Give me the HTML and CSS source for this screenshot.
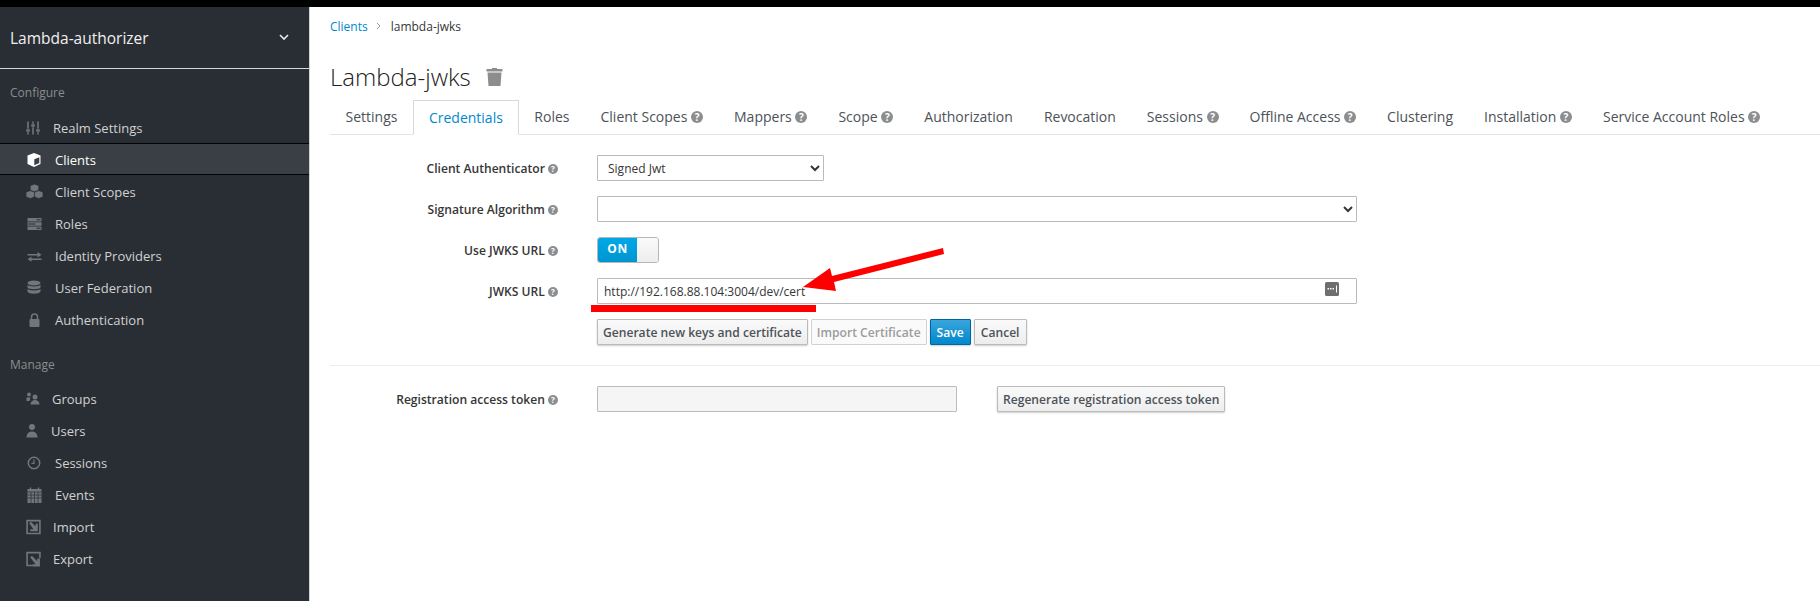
FILE: index.html
```html
<!DOCTYPE html>
<html lang="en">
<head>
  <meta charset="UTF-8" />
  <meta name="viewport" content="width=device-width, initial-scale=1.0"/>
  <title>Lambda-jwks</title>
  <link rel="stylesheet" href="styles.css">
</head>
<body>
  <div class="topbar"></div>
  <div class="page">
    <aside class="sidebar">
      <div class="realm">
        <span>Lambda-authorizer</span>
        <svg width="10" height="7" viewBox="0 0 10 7"><path d="M1 1l4 4 4-4" fill="none" stroke="#e8e8e8" stroke-width="1.6"/></svg>
      </div>
      <h4 class="nav-heading">Configure</h4>
      <ul class="nav">
        <li><svg width="15" height="16" viewBox="0 0 15 16"><path d="M2 1.500v13M7 1.500v13M12 1.500v13" stroke="#72767b" stroke-width="1.600"/><path d="M0 9h4v3H0zM5 4h4v3H5zM10 9h4v3h-4z" fill="#72767b" stroke="#292e34" stroke-width=".5"/></svg>Realm Settings</li>
        <li class="active"><svg width="17" height="16" viewBox="0 0 16 16"><path d="M7.500 1l6.500 2.500v8.500L7.500 15 1 12V3.500z" fill="#fff"/><path d="M7.800 13.300l5-2.200V5.200l-5 2z" fill="#393f44"/></svg>Clients</li>
        <li><svg width="17" height="17" viewBox="0 0 18 16"><path d="M9 .2l4.400 1.600v4.800L9 8.200 4.600 6.600V1.800zM4.500 7.100l4.400 1.600v4.900L4.500 15.300.1 13.600V8.700zM13.500 7.100l4.400 1.600v4.900l-4.400 1.700-4.400-1.700V8.700z" fill="#72767b" stroke="#292e34" stroke-width=".5"/></svg>Client Scopes</li>
        <li><svg width="17" height="16" viewBox="0 0 16 16"><path d="M1 2h14v3.600H1zM1 6.200h14v3.600H1zM1 10.400h14V14H1z" fill="#72767b"/><path d="M10 3.800h4M2 8h7M10 12.200h4" stroke="#292e34"/></svg>Roles</li>
        <li><svg width="17" height="16" viewBox="0 0 16 16"><path d="M1 6h10V4l4 2.700-4 2.700V7.500H1zM15 10.500V12H5v1.800L1 11.200l4-2.700v2z" fill="#72767b"/></svg>Identity Providers</li>
        <li><svg width="17" height="16" viewBox="0 0 16 16"><ellipse cx="7.500" cy="3" rx="6.500" ry="2.500" fill="#72767b"/><path d="M1 4.800c1 2.300 12 2.300 13 0v2.700c-1 2.300-12 2.300-13 0zM1 8.800c1 2.300 12 2.300 13 0v2.700c-1 3-12 3-13 0z" fill="#72767b"/></svg>User Federation</li>
        <li><svg width="17" height="16" viewBox="0 0 16 16"><path d="M5 7V5a3 3 0 0 1 6 0v2" fill="none" stroke="#72767b" stroke-width="1.500"/><rect x="3" y="7" width="10" height="8" rx="1" fill="#72767b"/></svg>Authentication</li>
      </ul>
      <h4 class="nav-heading manage">Manage</h4>
      <ul class="nav">
        <li><svg width="14" height="16" viewBox="0 0 14 16"><circle cx="3" cy="3.500" r="2" fill="#72767b"/><circle cx="9" cy="6" r="2.500" fill="#72767b"/><path d="M.5 6.500h4L3.500 10H.5zM4.500 13.500c0-6 9-6 9 0z" fill="#72767b"/></svg>Groups</li>
        <li><svg width="13" height="16" viewBox="0 0 13 16"><circle cx="6" cy="4" r="3" fill="#72767b"/><path d="M.5 14.500c0-8 11-8 11 0z" fill="#72767b"/></svg>Users</li>
        <li><svg width="17" height="16" viewBox="0 0 16 16"><circle cx="7.500" cy="8" r="5.700" fill="none" stroke="#72767b" stroke-width="1.500"/><path d="M7.500 4.500V8.300H5" fill="none" stroke="#72767b" stroke-width="1.200"/></svg>Sessions</li>
        <li><svg width="17" height="16" viewBox="0 0 16 16"><path d="M1 2h14v14H1z" fill="#72767b"/><path d="M4 .5v3M12 .5v3" stroke="#72767b" stroke-width="1.500"/><path d="M1 5h14M1 8h14M1 11h14M4.500 5v11M8 5v11M11.500 5v11" stroke="#292e34" stroke-width=".7"/></svg>Events</li>
        <li><svg width="15" height="16" viewBox="0 0 14 14"><path d="M1 1h12v12H1z" fill="none" stroke="#72767b" stroke-width="1.500"/><path d="M3 3.500L4.500 2 9 6.500V4h2v7H4V9h3z" fill="#72767b"/></svg>Import</li>
        <li><svg width="15" height="16" viewBox="0 0 14 14"><path d="M6 13H1V1h12v5" fill="none" stroke="#72767b" stroke-width="1.500"/><path d="M4 5.500L5.500 4 10.500 9V6.500h2.500V14H6v-2h3z" fill="#72767b"/></svg>Export</li>
      </ul>
    </aside>

    <main class="content">
      <div class="crumbs">
        <a href="#">Clients</a>
        <svg width="6" height="8" viewBox="0 0 6 8"><path d="M1 1l3 3-3 3" fill="none" stroke="#9c9c9c"/></svg>
        <span>lambda-jwks</span>
      </div>
      <div class="title-row">
        <h1>Lambda-jwks</h1>
        <svg width="17" height="19" viewBox="0 0 17 19"><path d="M6 2V1h5v1h5.500v2.500H.5V2zM1.500 5.500h14L14.500 19h-12z" fill="#8b8d8f"/></svg>
      </div>
      <ul class="tabs">
        <li>Settings</li>
        <li class="current">Credentials</li>
        <li>Roles</li>
        <li>Client Scopes <span class="q">?</span></li>
        <li>Mappers <span class="q">?</span></li>
        <li>Scope <span class="q">?</span></li>
        <li>Authorization</li>
        <li>Revocation</li>
        <li>Sessions <span class="q">?</span></li>
        <li>Offline Access <span class="q">?</span></li>
        <li>Clustering</li>
        <li>Installation <span class="q">?</span></li>
        <li>Service Account Roles <span class="q">?</span></li>
      </ul>

      <form class="form">
        <div class="row">
          <label>Client Authenticator <span class="q small">?</span></label>
          <select class="field short"><option>Signed Jwt</option></select>
        </div>
        <div class="row">
          <label>Signature Algorithm <span class="q small">?</span></label>
          <select class="field wide"><option></option></select>
        </div>
        <div class="row">
          <label>Use JWKS URL <span class="q small">?</span></label>
          <div class="switch"><span class="on">ON</span><span class="knob"></span></div>
        </div>
        <div class="row">
          <label>JWKS URL <span class="q small">?</span></label>
          <div class="input-wrap wide">
            <input class="field" type="text" value="http://192.168.88.104:3004/dev/cert">
            <span class="pw-key"><svg width="14" height="14" viewBox="0 0 14 14"><rect width="14" height="14" rx="1.500" fill="#6e6e6e"/><path d="M2.500 6h1.500v1.500H2.500zM5 6h1.500v1.500H5zM7.500 6H9v1.500H7.500z" fill="#fff"/><path d="M11.500 3.500v7" stroke="#fff"/></svg></span>
          </div>
        </div>
        <div class="row actions">
          <button type="button" class="btn">Generate new keys and certificate</button>
          <button type="button" class="btn off">Import Certificate</button>
          <button type="button" class="btn primary">Save</button>
          <button type="button" class="btn cancel">Cancel</button>
        </div>
        <hr>
        <div class="row">
          <label>Registration access token <span class="q small">?</span></label>
          <input class="field token" type="text" disabled>
          <button type="button" class="btn regen">Regenerate registration access token</button>
        </div>
      </form>
    </main>
  </div>

  <!-- red markup drawn on top of the screenshot -->
  <svg class="markup" width="1820" height="601" viewBox="0 0 1820 601">
    <path d="M943 248L832 276 830 268 803 287 836 291 834 282 944 254z" fill="#fe0000"/>
    <rect x="591" y="305" width="225" height="7" fill="#fe0000"/>
  </svg>
</body>
</html>
```

FILE: styles.css
```css
* {
  box-sizing: border-box;
}
html, body {
  height: 100%;
}
body {
  margin: 0;
  font-family: "Open Sans", sans-serif;
  font-size: 13px;
  color: #363636;
  background: white;
  overflow: hidden;
}
.topbar {
  height: 7px;
  background: black;
}
.page {
  display: flex;
  height: 594px;
}
.sidebar {
  width: 310px;
  flex: none;
  background: #292e34;
  border-right: 1px solid #d1d1d1;
  color: #d1d1d1;
}
.realm {
  height: 62px;
  padding: 0 20px 0 10px;
  display: flex;
  align-items: center;
  justify-content: space-between;
  font-size: 15.5px;
  color: #f0f0f0;
  border-bottom: 1px solid #d8d8d8;
}
.nav-heading {
  margin: 0;
  padding: 15px 0 9px 10px;
  font-size: 12px;
  line-height: 18px;
  font-weight: 400;
  color: #8b8d8f;
}
.nav-heading.manage {
  margin-top: 6px;
  padding-bottom: 8px;
}
.nav {
  list-style: none;
  margin: 0;
  padding: 0;
}
.nav li {
  height: 32px;
  padding: 1px 0 0 26px;
  display: flex;
  align-items: center;
  gap: 12px;
  font-size: 13px;
}
.nav li.active {
  background: #393f44;
  border-top: 1px solid #030303;
  border-bottom: 1px solid #030303;
  color: white;
}
.content {
  flex: 1;
  min-width: 0;
  padding-left: 20px;
}
.crumbs {
  height: 38px;
  display: flex;
  align-items: center;
  gap: 8.5px;
  font-size: 12px;
}
.crumbs a {
  color: #0088ce;
  text-decoration: none;
}
.title-row {
  height: 55px;
  padding-top: 7px;
  display: flex;
  align-items: center;
  gap: 15px;
}
h1 {
  margin: 0;
  font-size: 24px;
  font-weight: 300;
  color: #222;
}
.tabs {
  list-style: none;
  margin: 0;
  padding: 0;
  height: 35px;
  display: flex;
  border-bottom: 1px solid #e4e4e4;
}
.tabs li {
  height: 34px;
  padding: 0 15.5px;
  line-height: 33px;
  font-size: 14px;
  color: #4d5258;
  white-space: nowrap;
}
.tabs li.current {
  height: 35px;
  padding: 0 15px;
  color: #0088ce;
  background: white;
  border: 1px solid #d8d8d8;
  border-bottom-color: white;
}
.q {
  display: inline-block;
  width: 12px;
  height: 12px;
  border-radius: 50%;
  background: #8b8d8f;
  color: white;
  font-size: 10px;
  font-weight: 700;
  line-height: 12px;
  text-align: center;
  vertical-align: 1px;
}
.q.small {
  width: 10px;
  height: 10px;
  font-size: 8px;
  line-height: 10px;
}
.form {
  padding-top: 20px;
}
.row {
  display: flex;
  align-items: center;
  height: 26px;
  margin-bottom: 15px;
}
.row label {
  width: 228px;
  margin-right: 39px;
  flex: none;
  text-align: right;
  font-weight: 600;
  font-size: 12.1px;
}
.field {
  height: 26px;
  padding: 2px 6px;
  border: 1px solid #bbb;
  border-radius: 1px;
  background: white;
  font-family: inherit;
  font-size: 12px;
  color: #363636;
}
.short {
  width: 227px;
}
.wide {
  width: 760px;
}
.input-wrap {
  position: relative;
}
.input-wrap .field {
  width: 100%;
}
.pw-key {
  position: absolute;
  top: 4px;
  right: 18px;
  line-height: 0;
}
.switch {
  display: flex;
  width: 62px;
  height: 26px;
  border: 1px solid #b7b7b7;
  border-radius: 3px;
  overflow: hidden;
}
.switch .on {
  width: 39px;
  background: linear-gradient(#00a8e8, #0095d0);
  color: white;
  font-size: 12px;
  font-weight: 700;
  letter-spacing: 0.5px;
  line-height: 22px;
  text-align: center;
}
.switch .knob {
  flex: 1;
  background: linear-gradient(#fafafa, #ededed);
}
.actions {
  gap: 3px;
  padding-left: 267px;
  margin-bottom: 20px;
}
.btn {
  height: 26px;
  padding: 0 5px;
  border: 1px solid #bbb;
  border-radius: 1px;
  background: linear-gradient(#fafafa, #ededed);
  box-shadow: 0 1px 2px rgba(0, 0, 0, 0.2);
  font-family: inherit;
  font-size: 12.1px;
  font-weight: 600;
  color: #4d5258;
  white-space: nowrap;
}
.btn.off {
  color: #9c9c9c;
  background: #fafafa;
  border-color: #d1d1d1;
  box-shadow: none;
}
.btn.primary {
  min-width: 41px;
  background: linear-gradient(#39a5dc, #0088ce);
  border-color: #00659c;
  color: white;
}
.btn.cancel {
  min-width: 53px;
}
hr {
  margin: 0 0 20px;
  border: 0;
  border-top: 1px solid #ededed;
}
.token {
  width: 360px;
  background: #f5f5f5;
}
.regen {
  margin-left: 40px;
}
.markup {
  position: absolute;
  top: 0;
  left: 0;
  pointer-events: none;
}
```
